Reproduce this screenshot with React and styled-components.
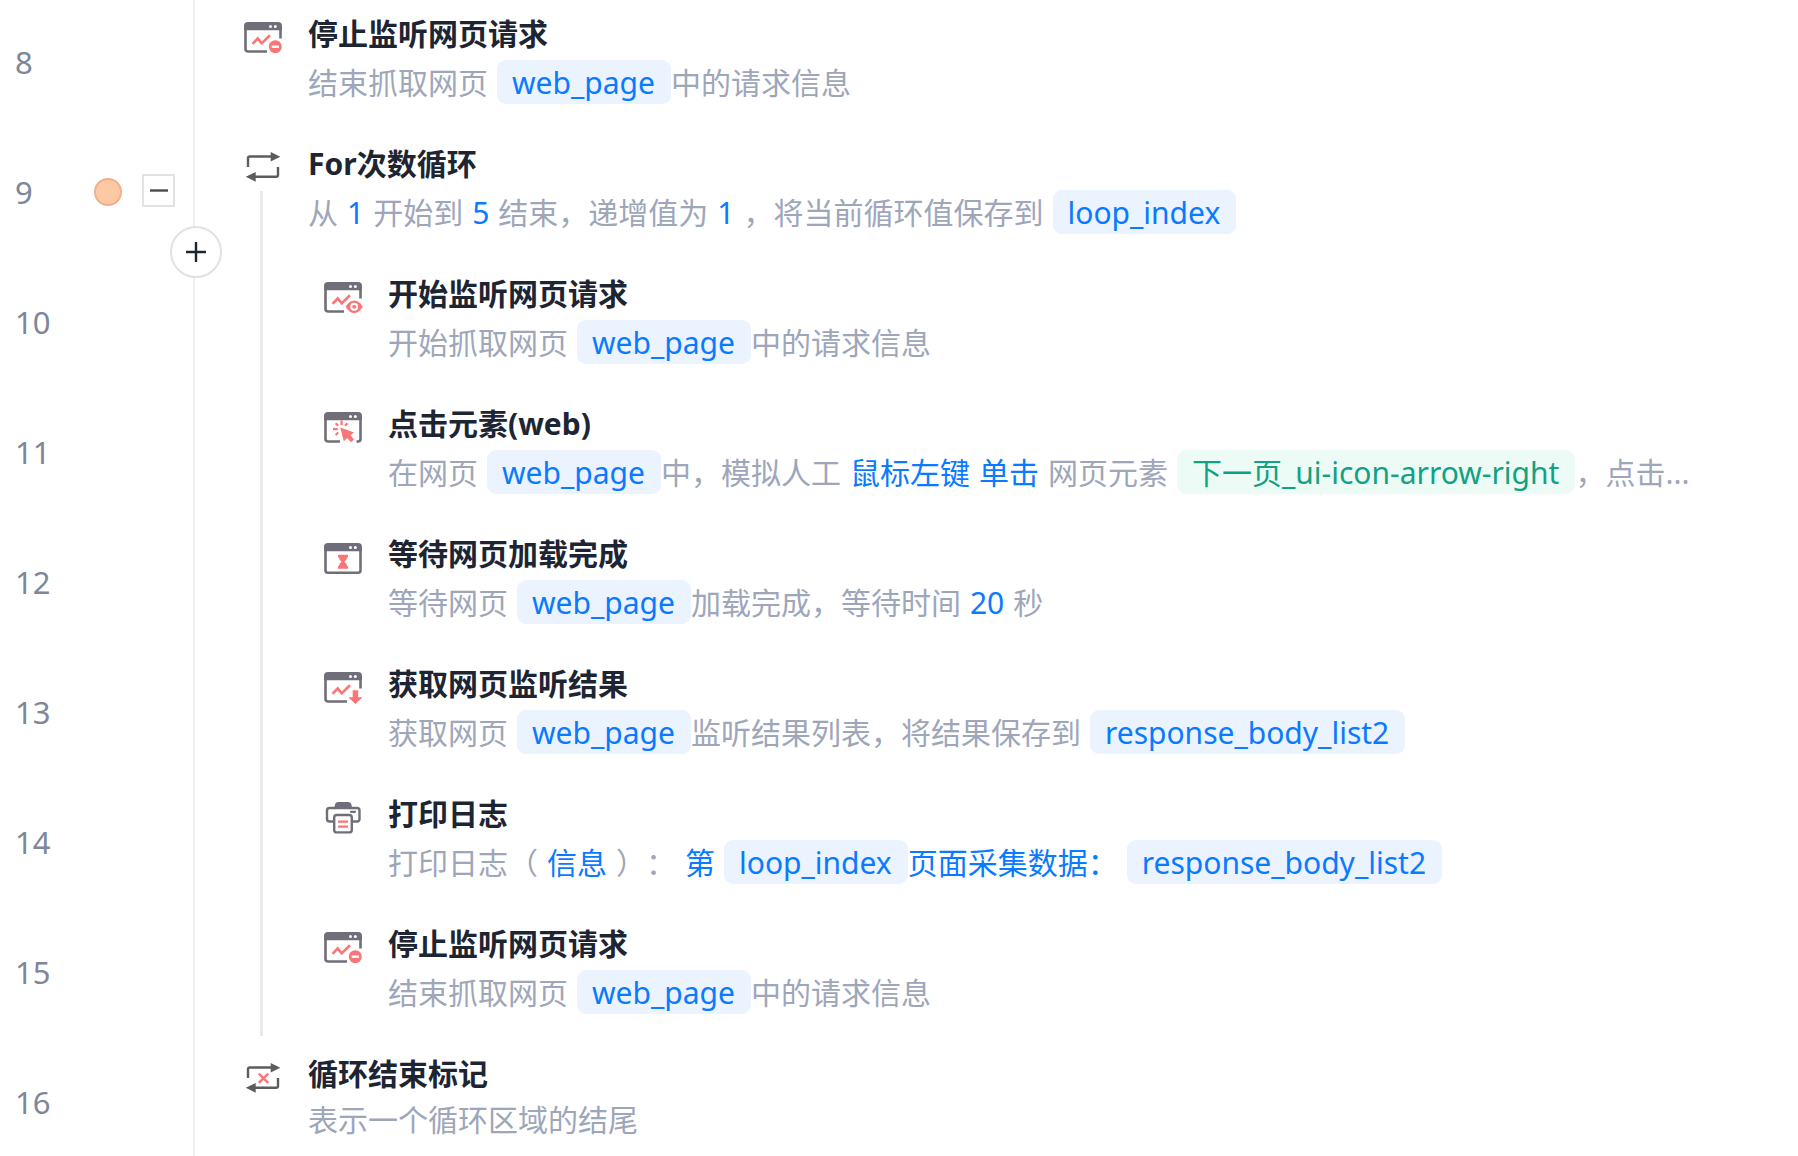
import React from 'react';
import styled, { createGlobalStyle } from 'styled-components';

const GlobalStyle = createGlobalStyle`
    * {
        box-sizing: border-box;
    }
    body {
        margin: 0;
        background-color: #fff;
        font-family: 'Noto Sans', 'Noto Sans CJK SC', sans-serif;
    }
`;

const Editor = styled.main`
    height: 100vh;
    overflow: hidden;
`;

const StepList = styled.ol`
    list-style: none;
    margin: 0;
    padding: 0;
`;

const StepRow = styled.li`
    display: flex;
    height: 130px;
`;

const Gutter = styled.div`
    position: relative;
    flex: none;
    display: flex;
    align-items: center;
    width: 195px;
    height: 130px;
    padding: 0 18px 7px 15px;
    border-right: 2px solid #eeeef4;
`;

const LineNumber = styled.span`
    width: 79px;
    color: #7d8799;
    font-size: 31px;
    line-height: 40px;
`;

const Breakpoint = styled.button`
    width: 28px;
    height: 28px;
    padding: 0;
    border: 2px solid #f0b088;
    border-radius: 50%;
    background-color: #ffc8a4;
`;

const FoldButton = styled.button`
    display: flex;
    align-items: center;
    justify-content: center;
    width: 33px;
    height: 33px;
    margin-left: auto;
    margin-bottom: 2px;
    padding: 0;
    border: 2px solid #e2e2e2;
    background-color: #fff;
`;

const InsertButton = styled.button`
    position: absolute;
    right: -29px;
    bottom: -18px;
    z-index: 1;
    display: flex;
    align-items: center;
    justify-content: center;
    width: 52px;
    height: 52px;
    padding: 0;
    border: 2px solid #e2e2e2;
    border-radius: 50%;
    background-color: #fff;
`;

const StepBody = styled.div`
    flex: 1;
    min-width: 0;
    display: flex;
    padding-left: 48px;
`;

const Rail = styled.div`
    flex: none;
    width: 80px;
    padding-left: 17px;
    padding-bottom: ${(props) => (props.$last ? '4px' : '0')};
`;

const RailLine = styled.div`
    width: 3px;
    height: 100%;
    background-color: #e9e9f0;
`;

const IconColumn = styled.div`
    flex: none;
    display: flex;
    flex-direction: column;
    width: 40px;
    padding-top: 20px;
`;

const LoopStart = styled.div`
    flex: 1;
    display: flex;
    padding: 5px 0 0 17px;
`;

const StepIcon = styled.svg`
    display: block;
    flex: none;
    width: 40px;
    height: 36px;
    fill: none;
    stroke-width: 3;
`;

const StepText = styled.div`
    flex: 1;
    min-width: 0;
    padding: 13px 24px 0 25px;
    white-space: nowrap;
`;

const Title = styled.h2`
    margin: 0 0 5px;
    color: #1d2533;
    font-size: 30px;
    font-weight: 700;
    line-height: 42px;
`;

const Description = styled.p`
    margin: 0;
    color: #9ea6b9;
    font-size: 30px;
    line-height: 40px;
    text-spacing-trim: space-all;
`;

const Plain = styled.span`
    color: ${(props) => (props.$blue ? '#0a7aff' : 'inherit')};
`;

const Value = styled.span`
    margin: 0 9px;
    color: #0a7aff;

    & + & {
        margin-left: 0;
    }
`;

const Tag = styled.span`
    display: inline-block;
    margin-left: 9px;
    padding: 2px 16px 0 15px;
    border-radius: 9px;
    background-color: ${(props) => (props.$element ? '#ecfbf5' : '#ebf3ff')};
    color: ${(props) => (props.$element ? '#12a182' : '#0a7aff')};
    line-height: 42px;

    ${Value} + & {
        margin-left: 0;
    }
`;

const GRAY = '#706e78';
const RED = '#fa7576';
const DARK = '#5c5c5c';

// Browser window outline, each icon leaves a different gap for its badge
const frames = {
    full: 'M2.5 9V29.5Q2.5 31.8 5 31.8H35Q37.5 31.8 37.5 29.5V9',
    badge: 'M2.5 9V29Q2.5 31.5 5.5 31.5H24M37.5 9V18.5',
    eye: 'M2.5 9V29Q2.5 31.5 5.5 31.5H21M37.5 9V18.5',
    cursor: 'M2.5 9V29Q2.5 31.5 5.5 31.5H17M33.5 31.5H35Q37.5 31.5 37.5 29V9',
};

const BrowserFrame = ({ frame }) => (
    <>
        <path d={frames[frame]} stroke={GRAY} strokeWidth="2.6" />
        <path d="M1 10.3V6Q1 2 5 2H35Q39 2 39 6V10.3Z" fill={GRAY} />
        <circle cx="27.5" cy="6.5" r="1.5" fill="#fff" />
        <circle cx="32.3" cy="6.5" r="1.5" fill="#fff" />
    </>
);

const Trend = () => (
    <path d="M9.5 23.8L14.7 18.5L18.7 23.4L27 15.3" stroke={RED} strokeWidth="2.6" />
);

const LoopArrows = () => (
    <>
        <path d="M5 17V8.3Q5 6.5 7 6.5H29M35 17V25Q35 26.8 33 26.8H12" stroke={DARK} strokeWidth="2.4" />
        <path d="M27.7 2L37.3 6.7L27.7 11.6ZM12.7 22L2.8 26.8L12.7 31.7Z" fill={DARK} />
    </>
);

const icons = {
    stop: (
        <>
            <BrowserFrame frame="badge" />
            <Trend />
            <circle cx="32.3" cy="26.7" r="6.5" fill={RED} />
            <path d="M28.7 26.7H36" stroke="#fff" strokeWidth="2.4" />
        </>
    ),
    watch: (
        <>
            <BrowserFrame frame="eye" />
            <Trend />
            <path d="M22.6 26.8Q26.5 20.4 31.2 20.4T39.8 26.8Q35.9 33.1 31.2 33.1T22.6 26.8Z" fill={RED} />
            <circle cx="31.2" cy="26.8" r="3" stroke="#fff" strokeWidth="2" />
        </>
    ),
    click: (
        <>
            <BrowserFrame frame="cursor" />
            <path d="M18.6 10.5V15.2M10 19.2H14.7M12.7 13.3L15.2 15.8M24.5 13.3L22 15.8M12.7 25L15.2 22.5" stroke={RED} strokeWidth="2.2" />
            <path d="M17.3 17.4L31 22.4L27.4 25.2L31 29.6L28 32.3L24.1 28L20.8 31.2Z" fill={RED} />
        </>
    ),
    wait: (
        <g transform="translate(0 1)">
            <BrowserFrame frame="full" />
            <path d="M15 13.7H25V16.3H24.3Q23.7 19 21.3 20.8Q23.7 22.3 24.3 25.2H25V27.8H15V25.2H15.7Q16.3 22.3 18.7 20.8Q16.3 19 15.7 16.3H15Z" fill={RED} />
        </g>
    ),
    result: (
        <>
            <BrowserFrame frame="badge" />
            <Trend />
            <path d="M29.7 20.3H35.2V27.2H39.5L32.4 34L25.3 27.2H29.7Z" fill={RED} />
        </>
    ),
    print: (
        <>
            <path d="M11.5 7.5L12 4.5Q12.4 2 15 2H25.5Q28 2 28.4 4.5L29 7.5Z" fill={GRAY} />
            <path d="M10 21.5H6.5Q4 21.5 4 19V10.5Q4 8 6.5 8H34Q36.5 8 36.5 10.5V19Q36.5 21.5 34 21.5H30" stroke={GRAY} strokeWidth="2.4" />
            <rect x="11.2" y="15" width="17.6" height="17.4" rx="2.5" stroke={GRAY} strokeWidth="2.4" />
            <path d="M28 11.8H32" stroke={GRAY} strokeWidth="2.2" strokeLinecap="round" />
            <path d="M15 21.7H25M15 26.7H25" stroke={RED} strokeWidth="2.2" />
        </>
    ),
    loop: <LoopArrows />,
    loopEnd: (
        <g transform="translate(0 1)">
            <LoopArrows />
            <path d="M15.8 12.7L25.2 21.9M25.2 12.7L15.8 21.9" stroke={RED} strokeWidth="2.4" />
        </g>
    ),
};

const text = (value) => ({ kind: 'text', value });
const val = (value) => ({ kind: 'value', value });
const inline = (value) => ({ kind: 'inline', value });
const variable = (value) => ({ kind: 'variable', value });
const element = (value) => ({ kind: 'element', value });

const steps = [
    {
        line: 8, icon: 'stop', title: '停止监听网页请求',
        parts: [text('结束抓取网页'), variable('web_page'), text('中的请求信息')],
    },
    {
        line: 9, icon: 'loop', title: 'For次数循环', opensLoop: true, active: true,
        parts: [
            text('从'), val('1'), text('开始到'), val('5'), text('结束，递增值为'), val('1'),
            text('，将当前循环值保存到'), variable('loop_index'),
        ],
    },
    {
        line: 10, icon: 'watch', title: '开始监听网页请求', nested: true,
        parts: [text('开始抓取网页'), variable('web_page'), text('中的请求信息')],
    },
    {
        line: 11, icon: 'click', title: '点击元素(web)', nested: true,
        parts: [
            text('在网页'), variable('web_page'), text('中，模拟人工'), val('鼠标左键'), val('单击'),
            text('网页元素'), element('下一页_ui-icon-arrow-right'), text('，点击...'),
        ],
    },
    {
        line: 12, icon: 'wait', title: '等待网页加载完成', nested: true,
        parts: [text('等待网页'), variable('web_page'), text('加载完成，等待时间'), val('20'), text('秒')],
    },
    {
        line: 13, icon: 'result', title: '获取网页监听结果', nested: true,
        parts: [
            text('获取网页'), variable('web_page'), text('监听结果列表，将结果保存到'),
            variable('response_body_list2'),
        ],
    },
    {
        line: 14, icon: 'print', title: '打印日志', nested: true,
        parts: [
            text('打印日志（'), val('信息'), text('）：'), val('第'), variable('loop_index'),
            inline('页面采集数据：'), variable('response_body_list2'),
        ],
    },
    {
        line: 15, icon: 'stop', title: '停止监听网页请求', nested: true, last: true,
        parts: [text('结束抓取网页'), variable('web_page'), text('中的请求信息')],
    },
    {
        line: 16, icon: 'loopEnd', title: '循环结束标记',
        parts: [text('表示一个循环区域的结尾')],
    },
];

const Part = ({ part }) => {
    switch (part.kind) {
        case 'value':
            return <Value>{part.value}</Value>;
        case 'inline':
            return <Plain $blue>{part.value}</Plain>;
        case 'variable':
            return <Tag>{part.value}</Tag>;
        case 'element':
            return <Tag $element>{part.value}</Tag>;
        default:
            return <Plain>{part.value}</Plain>;
    }
};

const Step = ({ step }) => (
    <StepRow>
        <Gutter>
            <LineNumber>{step.line}</LineNumber>
            {step.active && (
                <>
                    <Breakpoint type="button" aria-label="断点" />
                    <FoldButton type="button" aria-label="折叠">
                        <svg width="18" height="3" viewBox="0 0 18 3"><path d="M0 1.5H18" stroke="#4a4a4a" strokeWidth="2.4" /></svg>
                    </FoldButton>
                    <InsertButton type="button" aria-label="插入指令">
                        <svg width="20" height="20" viewBox="0 0 20 20"><path d="M0 10H20M10 0V20" stroke="#1d2533" strokeWidth="2.4" /></svg>
                    </InsertButton>
                </>
            )}
        </Gutter>
        <StepBody>
            {step.nested && <Rail $last={step.last}><RailLine /></Rail>}
            <IconColumn>
                <StepIcon viewBox="0 0 40 36" aria-hidden="true">{icons[step.icon]}</StepIcon>
                {step.opensLoop && <LoopStart><div><RailLine /></div></LoopStart>}
            </IconColumn>
            <StepText>
                <Title>{step.title}</Title>
                <Description>
                    {step.parts.map((part, index) => <Part key={index} part={part} />)}
                </Description>
            </StepText>
        </StepBody>
    </StepRow>
);

const App = () => {
    return (
        <>
            <GlobalStyle />
            <Editor>
                <StepList>
                    {steps.map((step) => <Step key={step.line} step={step} />)}
                </StepList>
            </Editor>
        </>
    );
}

export default App;
